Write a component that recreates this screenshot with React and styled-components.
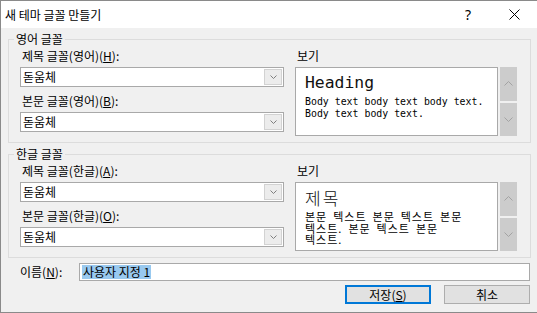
import React from 'react';
import styled, { createGlobalStyle } from 'styled-components';

const GlobalStyle = createGlobalStyle`
  * { box-sizing: border-box; }
  html, body { margin: 0; padding: 0; background: #f0f0f0; }
  body {
    font-family: "Noto Sans CJK KR", "Noto Sans", sans-serif;
    font-size: 12px;
    color: #000;
  }
`;

const Window = styled.div`
  width: 537px;
  height: 313px;
  display: flex;
  flex-direction: column;
  background: #f0f0f0;
  border: 1px solid #8a8a8a;
  border-right: none;
`;

const TitleBar = styled.div`
  height: 27px;
  flex: none;
  display: flex;
  align-items: center;
  background: #fff;
  padding-left: 4px;
`;

const Title = styled.span`
  flex: 1;
  font-size: 12px;
  line-height: 16px;
`;

const CaptionButton = styled.div`
  width: 46px;
  height: 27px;
  display: flex;
  align-items: center;
  justify-content: center;
  font-family: "Noto Sans", sans-serif;
  font-size: 14px;
`;

const Body = styled.div`
  flex: 1;
  display: flex;
  flex-direction: column;
  padding: 3px 6px 0 7px;
`;

const Group = styled.fieldset`
  margin: ${p => (p.$first ? '0' : '3px')} 0 0 0;
  padding: 0;
  border: 1px solid #dcdcdc;
  min-width: 0;
`;

const Legend = styled.legend`
  margin-left: 5px;
  padding: 0 2px;
  line-height: 16px;
  font-size: 12px;
`;

const GroupContent = styled.div`
  display: flex;
  gap: 11px;
  padding: 1px 13px 6px 11px;
`;

const FieldList = styled.div`
  width: 264px;
  display: flex;
  flex-direction: column;
  gap: 6px;
`;

const Field = styled.div`
  display: flex;
  flex-direction: column;
`;

const Label = styled.div`
  height: 16px;
  line-height: 16px;
  padding-left: 2px;
  margin-bottom: 3px;
  white-space: nowrap;
`;

const Key = styled.span`
  text-decoration: underline;
`;

const Select = styled.div`
  height: 20px;
  display: flex;
  align-items: stretch;
  background: #fff;
  border: 1px solid #a9a9a9;
`;

const SelectValue = styled.div`
  flex: 1;
  padding-left: 2px;
  line-height: 18px;
`;

const DropButton = styled.div`
  width: 18px;
  margin: 1px;
  display: flex;
  align-items: center;
  justify-content: center;
  background: #ececec;
  border: 1px solid #d2d2d2;
`;

const PreviewColumn = styled.div`
  display: flex;
  flex-direction: column;
`;

const PreviewRow = styled.div`
  display: flex;
  gap: 2px;
`;

const PreviewBox = styled.div`
  width: 203px;
  height: 69px;
  background: #fff;
  border: 1px solid #a9a9a9;
  padding: ${p => (p.$korean ? '3px' : '4px')} 0 0 9px;
  overflow: hidden;
`;

const LatinHeading = styled.div`
  font-family: "DejaVu Sans Mono", "Liberation Mono", monospace;
  font-size: 16.4px;
  font-weight: 300;
  line-height: 22px;
  margin-bottom: 2px;
  color: #111;
`;

const LatinLine = styled.div`
  font-family: "DejaVu Sans Mono", "Liberation Mono", monospace;
  font-size: 9.9px;
  line-height: 12px;
  white-space: nowrap;
`;

const KoreanHeading = styled.div`
  font-size: 17px;
  font-weight: 300;
  letter-spacing: 2px;
  line-height: 24px;
  margin-bottom: 1px;
  color: #111;
`;

const KoreanLine = styled.div`
  font-size: 11px;
  letter-spacing: 1px;
  word-spacing: 2.5px;
  line-height: 11.5px;
  white-space: nowrap;
`;

const ScrollColumn = styled.div`
  width: 17px;
  display: flex;
  flex-direction: column;
  gap: 2px;
`;

const ScrollButton = styled.div`
  flex: 1;
  display: flex;
  align-items: center;
  justify-content: center;
  background: #cccccc;
`;

const NameRow = styled.div`
  display: flex;
  align-items: center;
  margin-top: 5px;
  padding-left: 12px;
  margin-right: 1px;
`;

const NameLabel = styled.div`
  width: 59px;
  line-height: 16px;
`;

const NameInput = styled.div`
  flex: 1;
  height: 18px;
  background: #fff;
  border: 1px solid #a9a9a9;
  padding-left: 2px;
  display: flex;
  align-items: center;
`;

const Selection = styled.span`
  background: #99c9ef;
  line-height: 14px;
  padding: 0 1px;
`;

const ButtonRow = styled.div`
  display: flex;
  justify-content: flex-end;
  gap: 13px;
  margin-top: 4px;
  margin-right: 1px;
`;

const Button = styled.div`
  width: 86px;
  height: 19px;
  display: flex;
  align-items: center;
  justify-content: center;
  background: #e1e1e1;
  border: ${p => (p.$default ? '2px solid #0078d7' : '1px solid #adadad')};
  line-height: 16px;
`;

const Chevron = ({ up, color = '#808080', w = 8, h = 5 }) => (
  <svg width={w} height={h} viewBox={`0 0 ${w} ${h}`}>
    <polyline
      points={up ? `0.5,${h - 0.5} ${w / 2},0.5 ${w - 0.5},${h - 0.5}` : `0.5,0.5 ${w / 2},${h - 0.5} ${w - 0.5},0.5`}
      fill="none"
      stroke={color}
      strokeWidth="1"
    />
  </svg>
);

const CloseIcon = () => (
  <svg width="11" height="11" viewBox="0 0 11 11">
    <path d="M0.5 0.5 L10.5 10.5 M10.5 0.5 L0.5 10.5" stroke="#000" strokeWidth="1" fill="none" />
  </svg>
);

const FontSelect = ({ label, value }) => (
  <Field>
    <Label>{label}</Label>
    <Select>
      <SelectValue>{value}</SelectValue>
      <DropButton>
        <Chevron w={7} h={4} color="#7f7f7f" />
      </DropButton>
    </Select>
  </Field>
);

const Scroller = () => (
  <ScrollColumn>
    <ScrollButton>
      <Chevron up w={9} h={5} color="#a3a3a3" />
    </ScrollButton>
    <ScrollButton>
      <Chevron w={9} h={5} color="#a3a3a3" />
    </ScrollButton>
  </ScrollColumn>
);

export default function App() {
  return (
    <>
      <GlobalStyle />
      <Window>
        <TitleBar>
          <Title>새 테마 글꼴 만들기</Title>
          <CaptionButton>?</CaptionButton>
          <CaptionButton>
            <CloseIcon />
          </CaptionButton>
        </TitleBar>
        <Body>
          <Group $first>
            <Legend>영어 글꼴</Legend>
            <GroupContent>
              <FieldList>
                <FontSelect label={<>제목 글꼴(영어)(<Key>H</Key>):</>} value="돋움체" />
                <FontSelect label={<>본문 글꼴(영어)(<Key>B</Key>):</>} value="돋움체" />
              </FieldList>
              <PreviewColumn>
                <Label>보기</Label>
                <PreviewRow>
                  <PreviewBox>
                    <LatinHeading>Heading</LatinHeading>
                    <LatinLine>Body text body text body text.</LatinLine>
                    <LatinLine>Body text body text.</LatinLine>
                  </PreviewBox>
                  <Scroller />
                </PreviewRow>
              </PreviewColumn>
            </GroupContent>
          </Group>
          <Group>
            <Legend>한글 글꼴</Legend>
            <GroupContent>
              <FieldList>
                <FontSelect label={<>제목 글꼴(한글)(<Key>A</Key>):</>} value="돋움체" />
                <FontSelect label={<>본문 글꼴(한글)(<Key>O</Key>):</>} value="돋움체" />
              </FieldList>
              <PreviewColumn>
                <Label>보기</Label>
                <PreviewRow>
                  <PreviewBox $korean>
                    <KoreanHeading>제목</KoreanHeading>
                    <KoreanLine>본문 텍스트 본문 텍스트 본문</KoreanLine>
                    <KoreanLine>텍스트. 본문 텍스트 본문</KoreanLine>
                    <KoreanLine>텍스트.</KoreanLine>
                  </PreviewBox>
                  <Scroller />
                </PreviewRow>
              </PreviewColumn>
            </GroupContent>
          </Group>
          <NameRow>
            <NameLabel>이름(<Key>N</Key>):</NameLabel>
            <NameInput>
              <Selection>사용자 지정 1</Selection>
            </NameInput>
          </NameRow>
          <ButtonRow>
            <Button $default>저장(<Key>S</Key>)</Button>
            <Button>취소</Button>
          </ButtonRow>
        </Body>
      </Window>
    </>
  );
}
